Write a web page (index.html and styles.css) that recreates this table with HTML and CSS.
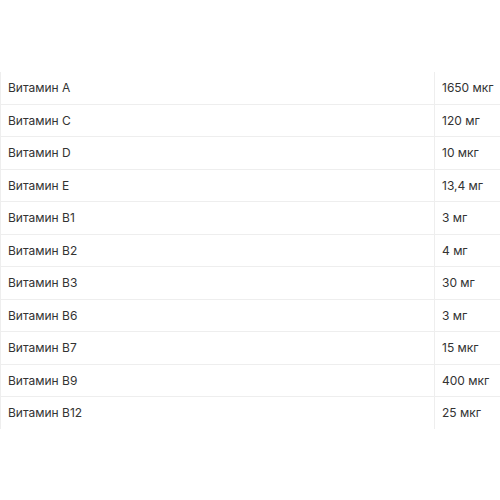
FILE: index.html
```html
<!DOCTYPE html>
<html lang="ru">
<head>
<meta charset="utf-8">
<link rel="stylesheet" href="styles.css">
</head>
<body>
<div class="page">
<table class="vit">
<colgroup><col class="c-name"><col class="c-val"></colgroup>
<tbody>
<tr><td>Витамин A</td><td class="val">1650 мкг</td></tr>
<tr><td>Витамин C</td><td class="val">120 мг</td></tr>
<tr><td>Витамин D</td><td class="val">10 мкг</td></tr>
<tr><td>Витамин E</td><td class="val">13,4 мг</td></tr>
<tr><td>Витамин B1</td><td class="val">3 мг</td></tr>
<tr><td>Витамин B2</td><td class="val">4 мг</td></tr>
<tr><td>Витамин B3</td><td class="val">30 мг</td></tr>
<tr><td>Витамин B6</td><td class="val">3 мг</td></tr>
<tr><td>Витамин B7</td><td class="val">15 мкг</td></tr>
<tr><td>Витамин B9</td><td class="val">400 мкг</td></tr>
<tr><td>Витамин B12</td><td class="val">25 мкг</td></tr>
</tbody>
</table>
</div>
</body>
</html>
```
FILE: styles.css
```css
html, body {
  margin: 0;
  padding: 0;
  background: #fff;
}
.page {
  padding-top: 72px;
  font-family: Inter, "Noto Sans", sans-serif;
  font-size: 12px;
  color: #333;
}
.vit {
  width: 100%;
  table-layout: fixed;
  border-collapse: collapse;
  border-left: 1px solid #eeeeee;
}
.c-name {
  width: 434px;
}
.vit td {
  padding: 8px 7px;
  line-height: 15.5px;
  border-bottom: 1px solid #eeeeee;
  text-align: left;
  white-space: nowrap;
}
.vit tr:last-child td {
  border-bottom: none;
}
.vit .val {
  border-left: 1px solid #eeeeee;
}
```
